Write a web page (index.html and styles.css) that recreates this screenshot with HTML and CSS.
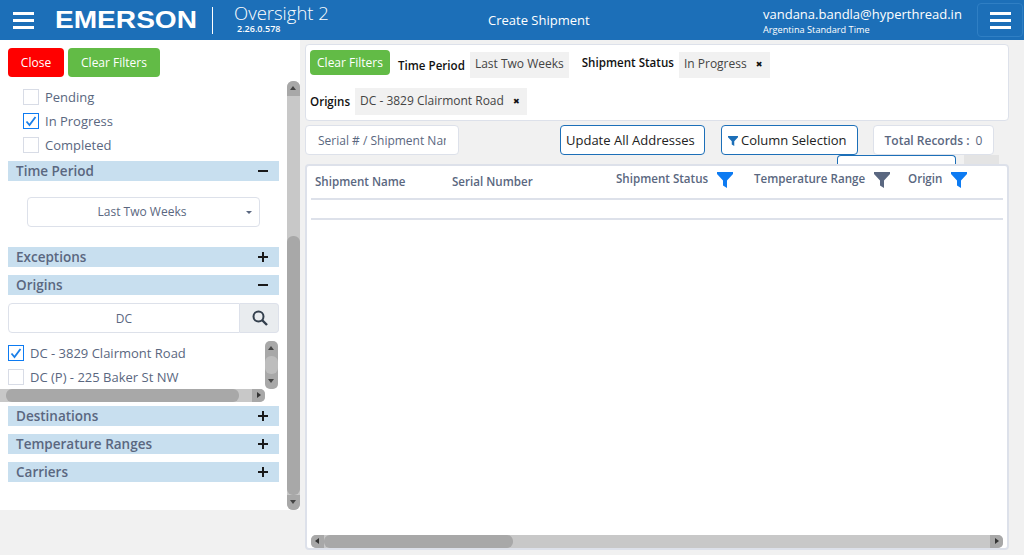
FILE: index.html
```html
<!DOCTYPE html>
<html lang="en">
<head>
    <meta charset="UTF-8">
    <meta name="viewport" content="width=device-width, initial-scale=1.0">
    <link rel="stylesheet" href="styles.css">
    <title>Create Shipment</title>
</head>
<body>
    <svg width="0" height="0" class="defs">
        <symbol id="funnel" viewBox="0 0 16 16"><path d="M0 0H16V2L10 8.500V16L6 13.500V8.500L0 2Z"/></symbol>
        <symbol id="check" viewBox="0 0 16 16"><path d="M3.500 8.500L6.500 12L12.500 4" fill="none" stroke="#1a7fe8" stroke-width="1.800"/></symbol>
    </svg>
    <header class="topbar">
        <div class="burger"><i></i><i></i><i></i></div>
        <div class="logo"><span class="logo-word">EMERSON</span></div>
        <div class="product">
            <div class="product-name">Oversight 2</div>
            <div class="product-version">2.26.0.578</div>
        </div>
        <div class="page-title">Create Shipment</div>
        <div class="user">
            <div class="user-mail">vandana.bandla@hyperthread.in</div>
            <div class="user-zone">Argentina Standard Time</div>
        </div>
        <div class="menu-btn"><div class="burger"><i></i><i></i><i></i></div></div>
    </header>

    <div class="page">
        <aside class="sidebar">
            <div class="side-content">
                <div class="side-actions">
                    <div class="btn btn-red">Close</div>
                    <div class="btn btn-green">Clear Filters</div>
                </div>
                <div class="status-list">
                    <label class="check-row"><span class="box"></span>Pending</label>
                    <label class="check-row"><span class="box on"><svg width="16" height="16"><use href="#check"/></svg></span>In Progress</label>
                    <label class="check-row"><span class="box"></span>Completed</label>
                </div>
                <div class="section">Time Period<b class="minus"></b></div>
                <div class="select">Last Two Weeks<span class="caret"></span></div>
                <div class="section">Exceptions<b class="plus"></b></div>
                <div class="section">Origins<b class="minus"></b></div>
                <div class="search">
                    <div class="search-input">DC</div>
                    <div class="search-btn">
                        <svg width="16" height="16" viewBox="0 0 16 16"><circle cx="6.500" cy="6.500" r="5" fill="none" stroke="#333f4d" stroke-width="2"/><path d="M10 10L15 15" stroke="#333f4d" stroke-width="2.400"/></svg>
                    </div>
                </div>
                <div class="origin-list">
                    <div class="origin-rows">
                        <label class="check-row"><span class="box on"><svg width="16" height="16"><use href="#check"/></svg></span>DC - 3829 Clairmont Road</label>
                        <label class="check-row"><span class="box"></span>DC (P) - 225 Baker St NW</label>
                    </div>
                    <div class="mini-v">
                        <span class="up"></span><span class="mini-thumb"></span><span class="down"></span>
                    </div>
                </div>
                <div class="mini-h"><span class="mini-h-thumb"></span><span class="right"></span></div>
                <div class="section">Destinations<b class="plus"></b></div>
                <div class="section">Temperature Ranges<b class="plus"></b></div>
                <div class="section">Carriers<b class="plus"></b></div>
            </div>
            <div class="side-scroll">
                <span class="side-btn"><span class="up"></span></span>
                <span class="side-track"></span>
                <span class="side-thumb"></span>
                <span class="side-btn"><span class="down"></span></span>
            </div>
        </aside>

        <main class="main">
            <section class="filters">
                <div class="filter-row">
                    <div class="btn btn-green btn-small">Clear Filters</div>
                    <span class="filter-label time-label">Time Period</span>
                    <span class="chip">Last Two Weeks</span>
                    <span class="filter-label status-label">Shipment Status</span>
                    <span class="chip chip-status">In Progress<b class="x">&#10006;</b></span>
                </div>
                <div class="filter-row second">
                    <span class="filter-label">Origins</span>
                    <span class="chip chip-origin">DC - 3829 Clairmont Road<b class="x">&#10006;</b></span>
                </div>
            </section>

            <div class="toolbar">
                <div class="serial"><span>Serial # / Shipment Name</span></div>
                <div class="outline update">Update All Addresses</div>
                <div class="outline columns"><svg width="10" height="10"><use href="#funnel" fill="#1c6fb8"/></svg>Column Selection</div>
                <div class="records">Total Records :<span>0</span></div>
            </div>

            <div class="peek">
                <div class="peek-btn"></div>
                <div class="peek-grey"></div>
            </div>

            <section class="table-card">
                <div class="thead">
                    <div class="th th-name">Shipment Name</div>
                    <div class="th th-serial">Serial Number</div>
                    <div class="th th-status">Shipment Status<svg width="16" height="16"><use href="#funnel" fill="#0d7bf2"/></svg></div>
                    <div class="th th-temp">Temperature Range<svg width="16" height="16"><use href="#funnel" fill="#5a6780"/></svg></div>
                    <div class="th th-origin">Origin<svg width="16" height="16"><use href="#funnel" fill="#0d7bf2"/></svg></div>
                </div>
                <div class="empty-row"></div>
                <div class="table-body"></div>
                <div class="table-scroll">
                    <span class="ts-btn"><span class="left"></span></span>
                    <span class="ts-thumb"></span>
                    <span class="ts-btn end"><span class="right"></span></span>
                </div>
            </section>
        </main>
    </div>
</body>
</html>
```

FILE: styles.css
```css
*{
    box-sizing: border-box;
}
body{
    margin: 0;
    height: 555px;
    overflow: hidden;
    background: #f1f1f1;
    color: #5a6780;
    font-family: "Open Sans", sans-serif;
    font-size: 13px;
}
.defs{
    display: block;
    height: 0;
}
.topbar{
    display: flex;
    align-items: center;
    height: 40px;
    background: #1c6fb8;
    color: #fff;
}
.burger{
    display: flex;
    flex-direction: column;
    justify-content: space-between;
    width: 21px;
    height: 17px;
}
.burger i{
    display: block;
    height: 3px;
    background: #fff;
}
.topbar > .burger{
    margin-left: 13px;
}
.logo{
    margin-left: 21px;
    width: 158px;
    height: 27px;
    border-right: 1px solid #fff;
    font-family: "Liberation Sans", sans-serif;
    font-weight: bold;
    font-size: 24px;
    line-height: 25px;
}
.logo-word{
    display: inline-block;
    transform: scaleX(1.17);
    transform-origin: left center;
}
.product{
    margin-left: 21px;
    width: 254px;
}
.product-name{
    font-size: 18.500px;
    line-height: 20px;
    font-weight: 300;
    margin-top: -3px;
}
.product-version{
    font-size: 9px;
    line-height: 11px;
    margin-left: 3px;
    font-weight: 600;
}
.page-title{
    width: 275px;
    font-size: 13px;
}
.user{
    width: 214px;
}
.user-mail{
    font-size: 13px;
    line-height: 18px;
    margin-top: 1px;
}
.user-zone{
    font-size: 9.200px;
    line-height: 14px;
}
.menu-btn{
    width: 46px;
    height: 34px;
    display: flex;
    align-items: center;
    justify-content: center;
    border: 1px solid #2f7fc4;
    border-radius: 4px;
}
.page{
    display: flex;
    align-items: flex-start;
    height: 515px;
}

/* left filter panel */
.sidebar{
    display: flex;
    align-items: flex-end;
    width: 300px;
    height: 470px;
    background: #fff;
}
.side-content{
    width: 287px;
    height: 470px;
    padding: 8px 0 0 8px;
}
.side-actions{
    display: flex;
    gap: 4px;
}
.btn{
    height: 29px;
    border-radius: 4px;
    color: #fff;
    font-size: 12px;
    line-height: 29px;
    text-align: center;
}
.btn-red{
    width: 56px;
    background: #f00;
}
.btn-green{
    width: 92px;
    background: #62bb46;
}
.status-list{
    margin: 8px 0 4px 15px;
}
.check-row{
    display: flex;
    align-items: center;
    height: 24px;
    color: #5a6780;
}
.box{
    display: block;
    width: 16px;
    height: 16px;
    margin-right: 6px;
    border: 1px solid #d8dce6;
}
.box svg{
    display: block;
    margin: -1px;
}
.box.on{
    border-color: #0d7bf2;
}
.section{
    display: flex;
    justify-content: space-between;
    align-items: center;
    width: 271px;
    height: 20px;
    margin-bottom: 8px;
    padding: 0 11px 1px 8px;
    background: #c8dfef;
    font-size: 13.500px;
    font-weight: 600;
    color: #5a6780;
}
.minus, .plus{
    display: block;
    position: relative;
    width: 10px;
    height: 2px;
    background: #1a1a1a;
}
.plus::after{
    content: "";
    position: absolute;
    left: 4px;
    top: -4px;
    width: 2px;
    height: 10px;
    background: #1a1a1a;
}
.select{
    position: relative;
    width: 233px;
    height: 30px;
    margin: 16px 0 20px 19px;
    padding-right: 3px;
    border: 1px solid #dde1ea;
    border-radius: 4px;
    font-size: 12px;
    line-height: 28px;
    text-align: center;
}
.caret{
    position: absolute;
    right: 7px;
    top: 13px;
    border-top: 3px solid #5a6780;
    border-left: 3px solid transparent;
    border-right: 3px solid transparent;
}
.search{
    display: flex;
    width: 271px;
    height: 30px;
    margin-bottom: 8px;
}
.search-input{
    flex: 1;
    border: 1px solid #dde1ea;
    border-radius: 4px 0 0 4px;
    font-size: 12px;
    line-height: 30px;
    text-align: center;
}
.search-btn{
    display: flex;
    align-items: center;
    justify-content: center;
    width: 39px;
    padding-left: 1px;
    background: #e9ecef;
    border: 1px solid #dde1ea;
    border-left: 0;
    border-radius: 0 4px 4px 0;
}
.origin-list{
    display: flex;
    justify-content: space-between;
    width: 270px;
    height: 48px;
}
.mini-v{
    display: flex;
    flex-direction: column;
    width: 13px;
    height: 48px;
    background: #a8a8a8;
    border-radius: 5px;
}
.mini-v .up, .mini-v .down{
    height: 15px;
}
.mini-thumb{
    display: block;
    height: 18px;
    background: #bdbdbd;
    border-radius: 6px;
}
.up, .down, .left, .right{
    display: block;
    position: relative;
}
.up::after, .down::after, .left::after, .right::after{
    content: "";
    position: absolute;
    width: 0;
    height: 0;
}
.up::after{
    left: 3px;
    top: 5px;
    border: 3.500px solid transparent;
    border-top: 0;
    border-bottom: 4px solid #444;
}
.down::after{
    left: 3px;
    top: 5px;
    border: 3.500px solid transparent;
    border-bottom: 0;
    border-top: 4px solid #444;
}
.left::after{
    left: 4px;
    top: 3px;
    border: 3.500px solid transparent;
    border-left: 0;
    border-right: 4px solid #333;
}
.right::after{
    left: 5px;
    top: 3px;
    border: 3.500px solid transparent;
    border-right: 0;
    border-left: 4px solid #333;
}
.mini-h{
    display: flex;
    justify-content: space-between;
    width: 265px;
    height: 13px;
    margin: 0 0 4px -8px;
    padding-left: 6px;
    background: #c8c8c8;
    border-radius: 0 5px 5px 0;
}
.mini-h-thumb{
    display: block;
    width: 233px;
    background: #a8a8a8;
    border-radius: 6px;
}
.mini-h .right{
    width: 13px;
    background: #a8a8a8;
    border-radius: 0 5px 5px 0;
}
.side-scroll{
    display: flex;
    flex-direction: column;
    width: 13px;
    height: 429px;
    background: #c8c8c8;
    border-radius: 6px;
    overflow: hidden;
}
.side-btn{
    display: block;
    height: 15px;
    background: #a8a8a8;
}
.side-track{
    display: block;
    height: 140px;
}
.side-thumb{
    display: block;
    height: 259px;
    background: #a8a8a8;
    border-radius: 6px;
}

/* right side */
.main{
    width: 704px;
    margin: 4px 0 0 5px;
}
.filters{
    height: 77px;
    padding: 5px 4px;
    background: #fff;
    border: 1px solid #dde1ea;
    border-radius: 4px;
    color: #333;
}
.filter-row{
    display: flex;
    align-items: center;
    height: 29px;
}
.filter-row.second{
    margin-top: 9px;
    height: 27px;
}
.btn-small{
    width: 80px;
    height: 25px;
    line-height: 25px;
    margin-top: -4px;
}
.filter-label{
    color: #111;
    font-size: 11.600px;
    font-weight: 600;
    white-space: nowrap;
}
.time-label{
    margin-left: 8px;
    margin-top: 2px;
}
.status-label{
    margin-left: 13px;
    margin-top: -4px;
}
.chip{
    display: flex;
    align-items: center;
    height: 26px;
    margin-left: 5px;
    padding: 0 5px 2px;
    background: #f1f1f1;
    color: #444;
    font-size: 12px;
    white-space: nowrap;
}
.chip-status{
    width: 91px;
}
.chip-origin{
    width: 172px;
    height: 27px;
}
.x{
    margin: 2px 0 0 9px;
    color: #111;
    font-family: "DejaVu Sans", sans-serif;
    font-size: 8px;
}
.toolbar{
    display: flex;
    height: 30px;
    margin-top: 4px;
}
.serial{
    width: 154px;
    padding: 0 12px;
    background: #fff;
    border: 1px solid #dde1ea;
    border-radius: 4px;
    font-size: 12px;
    line-height: 30px;
    white-space: nowrap;
}
.serial span{
    display: block;
    overflow: hidden;
}
.outline{
    display: flex;
    align-items: center;
    background: #fff;
    border: 1px solid #1c6fb8;
    border-radius: 4px;
    color: #222;
    font-size: 13px;
}
.update{
    width: 145px;
    margin-left: 101px;
    padding-left: 5px;
}
.columns{
    width: 137px;
    margin-left: 16px;
    padding-left: 6px;
}
.columns svg{
    margin: 1px 3px 0 0;
}
.records{
    width: 121px;
    margin-left: 15px;
    background: #fff;
    border: 1px solid #dde1ea;
    border-radius: 4px;
    color: #5a6780;
    font-size: 12px;
    font-weight: 600;
    line-height: 30px;
    text-align: center;
}
.records span{
    margin-left: 6px;
    font-weight: 400;
}
.peek{
    display: flex;
    height: 9px;
}
.peek-btn{
    width: 119px;
    margin-left: 532px;
    background: #fff;
    border: 1px solid #1c6fb8;
    border-bottom: 0;
    border-radius: 4px 4px 0 0;
}
.peek-grey{
    width: 35px;
    margin-left: 8px;
    background: #e4e4e4;
}
.table-card{
    display: flex;
    flex-direction: column;
    height: 386px;
    padding: 0 4px;
    background: #fff;
    border: 2px solid #dde1ea;
    border-radius: 4px;
}
.thead{
    display: flex;
    height: 34px;
    border-bottom: 2px solid #dde1ea;
    font-size: 11.600px;
    font-weight: 600;
}
.th{
    display: flex;
    align-items: flex-start;
    white-space: nowrap;
}
.th svg{
    margin: 1px 0 0 9px;
}
.th-name{
    width: 141px;
    padding: 8px 0 0 4px;
}
.th-serial{
    width: 164px;
    padding-top: 8px;
}
.th-status{
    width: 138px;
    padding-top: 5px;
}
.th-temp{
    width: 154px;
    padding-top: 5px;
}
.th-origin{
    padding-top: 5px;
}
.empty-row{
    height: 20px;
    border-bottom: 2px solid #dde1ea;
}
.table-body{
    flex: 1;
}
.table-scroll{
    display: flex;
    justify-content: space-between;
    height: 13px;
    background: #c8c8c8;
    border-radius: 5px;
    overflow: hidden;
}
.ts-btn{
    display: block;
    width: 13px;
    background: #a8a8a8;
}
.ts-thumb{
    display: block;
    width: 189px;
    margin-right: auto;
    background: #a8a8a8;
    border-radius: 6px;
}
```
